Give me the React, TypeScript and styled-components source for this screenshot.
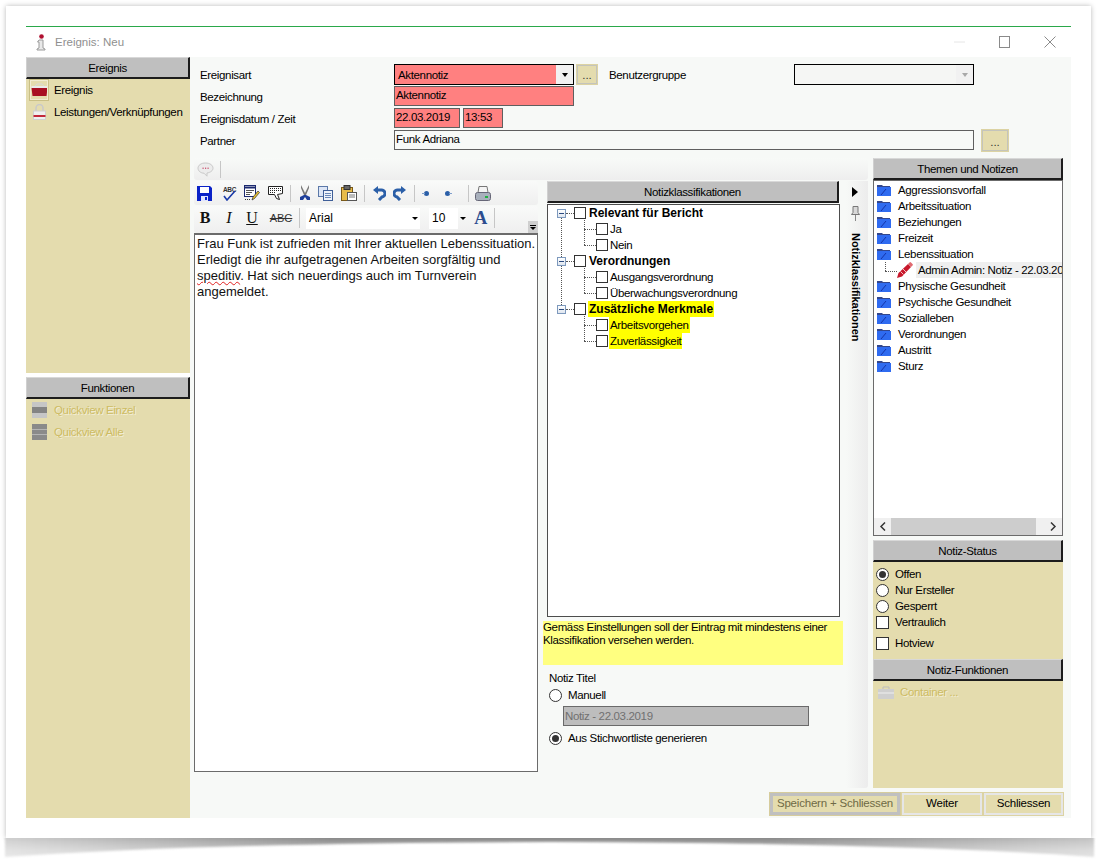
import React from "react";
import styled, { createGlobalStyle } from "styled-components";

const GlobalStyle = createGlobalStyle`
  html, body {
    margin: 0;
    padding: 0;
    background: #fff;
  }
  body {
    font-family: "Liberation Sans", Arial, sans-serif;
    font-size: 11.5px;
    letter-spacing: -0.35px;
    color: #000;
  }
  svg {
    flex: none;
  }
`;

const TAN = "#e4dcae";

const Page = styled.div`
  width: 1105px;
  height: 867px;
  padding: 6px 0 0 6px;
  box-sizing: border-box;
  overflow: hidden;
`;

const Sheet = styled.div`
  position: relative;
  width: 1085px;
  height: 832px;
  box-sizing: border-box;
  padding: 20px;
  background: #fff;
  box-shadow: 0 0 5px rgba(0, 0, 0, 0.28);
`;

const SheetShadow = styled.svg`
  position: absolute;
  left: -4px;
  top: 100%;
`;

const Dialog = styled.div`
  display: flex;
  flex-direction: column;
  height: 792px;
  border-top: 1px solid #2aa84a;
  box-sizing: border-box;
`;

const TitleBar = styled.div`
  flex: 0 0 30px;
  display: flex;
  align-items: center;
  padding-left: 10px;
  color: #8f8f8f;
`;

const TitleText = styled.span`
  margin-left: 9px;
  letter-spacing: 0;
`;

const WindowButtons = styled.div`
  margin-left: auto;
  display: flex;
  align-items: center;
  padding-right: 15px;
  gap: 34px;
`;

const Body = styled.div`
  flex: 1;
  display: flex;
  background: #f7f9f7;
  min-height: 0;
`;

const LeftColumn = styled.div`
  flex: 0 0 164px;
  min-width: 0;
  display: flex;
  flex-direction: column;
  background: #fff;
`;

const LeftPanel = styled.div<{ $height?: number }>`
  background: ${TAN};
  ${(p) => (p.$height ? `flex: 0 0 ${p.$height}px;` : "flex: 1;")}
  ${(p) => (p.$height ? "margin-bottom: 4px;" : "")}
`;

const Header = styled.div`
  height: 22px;
  box-sizing: border-box;
  display: flex;
  align-items: center;
  justify-content: center;
  background: #bfbfbf;
  border-top: 1px solid #d8d8d8;
  border-left: 1px solid #d0d0d0;
  border-right: 2px solid #1c1c1c;
  border-bottom: 2px solid #1c1c1c;
  flex: none;
`;

const NavItem = styled.div<{ $disabled?: boolean }>`
  height: 22px;
  display: flex;
  align-items: center;
  padding-left: 3px;
  gap: 5px;
  white-space: nowrap;
  color: ${(p) => (p.$disabled ? "#cdbb62" : "#000")};
  text-shadow: ${(p) => (p.$disabled ? "1px 1px 0 #f3eed6" : "none")};
`;

const NavIcon = styled.span<{ $selected?: boolean }>`
  width: 20px;
  height: 22px;
  box-sizing: border-box;
  display: flex;
  align-items: center;
  justify-content: center;
  border: 1px solid ${(p) => (p.$selected ? "#c9bf85" : "transparent")};
  outline: ${(p) => (p.$selected ? "1px solid #f1ecd2" : "none")};
  outline-offset: -2px;
`;

const Main = styled.div`
  flex: 1;
  min-width: 0;
  display: flex;
  flex-direction: column;
`;

const Form = styled.div`
  height: 94px;
  padding: 7px 0 0 10px;
  box-sizing: border-box;
  display: flex;
  flex-direction: column;
`;

const FormRow = styled.div<{ $height: number; $gap?: number }>`
  height: ${(p) => p.$height}px;
  margin-bottom: ${(p) => p.$gap ?? 1}px;
  display: flex;
  align-items: center;
`;

const FormLabel = styled.label<{ $flush?: boolean }>`
  flex: 0 0 194px;
  margin-top: ${(p) => (p.$flush ? 0 : 2)}px;
`;

const GroupLabelInline = styled.span`
  flex: 0 0 185px;
  margin-left: 11px;
`;

const Combo = styled.div<{ $tone: "required" | "disabled"; $width: number }>`
  width: ${(p) => p.$width}px;
  height: 21px;
  box-sizing: border-box;
  border: 1px solid #000;
  background: ${(p) => (p.$tone === "required" ? "#ff8080" : "#f5f6f4")};
  display: flex;
  align-items: center;
  padding-left: 3px;
`;

const ComboArrow = styled.span<{ $disabled?: boolean }>`
  margin-left: auto;
  width: 17px;
  height: 19px;
  background: #f1f1f1;
  display: flex;
  align-items: center;
  justify-content: center;
  &::after {
    content: "";
    border-left: 3px solid transparent;
    border-right: 3px solid transparent;
    border-top: 4px solid ${(p) => (p.$disabled ? "#a8a8a8" : "#000")};
  }
`;

const Field = styled.div<{ $width: number; $required?: boolean; $offset?: number }>`
  width: ${(p) => p.$width}px;
  height: 20px;
  margin-left: ${(p) => p.$offset ?? 0}px;
  box-sizing: border-box;
  border: 1px solid #5f5f5f;
  background: ${(p) => (p.$required ? "#ff8080" : "#f7f9f7")};
  padding: 0 0 2px 1px;
  display: flex;
  align-items: center;
  white-space: nowrap;
  overflow: hidden;
`;

const EllipsisButton = styled.button<{ $width: number; $height: number; $offset: number }>`
  width: ${(p) => p.$width}px;
  height: ${(p) => p.$height}px;
  margin: 0 0 0 ${(p) => p.$offset}px;
  box-sizing: border-box;
  padding: 0 0 2px;
  background: ${TAN};
  border: 2px solid #c4c4bc;
  outline: 1px solid #dcd3a3;
  outline-offset: -1px;
  font: 11.5px "Liberation Sans", Arial, sans-serif;
  color: #333;
  display: flex;
  align-items: flex-end;
  justify-content: center;
`;

const WorkArea = styled.div`
  padding: 0 8px 0 4px;
  height: 630px;
  margin-top: 7px;
  display: flex;
  gap: 5px;
`;

const Center = styled.div`
  width: 674px;
  display: flex;
  flex-direction: column;
`;

const MessageStrip = styled.div`
  height: 22px;
  flex: none;
  display: flex;
  align-items: center;
  padding-left: 3px;
  gap: 6px;
  background: linear-gradient(#f8faf8, #eeeeee);
  border-radius: 3px;
`;

const ToolSep = styled.span<{ $tall?: boolean }>`
  width: 1px;
  height: ${(p) => (p.$tall ? 20 : 17)}px;
  background: #c6c6c6;
  flex: none;
`;

const CenterRow = styled.div`
  flex: 1;
  margin-top: 1px;
  display: flex;
  min-height: 0;
`;

const EditorColumn = styled.div`
  flex: 0 0 344px;
  display: flex;
  flex-direction: column;
  height: 591px;
`;

const ToolRow = styled.div<{ $height: number; $offset?: number; $lift?: number }>`
  height: ${(p) => p.$height}px;
  margin-top: ${(p) => p.$offset ?? 0}px;
  padding-bottom: ${(p) => p.$lift ?? 0}px;
  box-sizing: border-box;
  flex: none;
  position: relative;
  display: flex;
  align-items: center;
  background: linear-gradient(#f9faf9, #efefef);
  border-radius: 3px;
`;

const ToolGroup = styled.div<{ $gap: number }>`
  display: flex;
  align-items: center;
  gap: ${(p) => p.$gap}px;
  padding-left: 3px;
`;

const ToolSpacer = styled.span`
  width: 1px;
  flex: none;
`;

const FormatBtn = styled.span<{ $w: number; $kind: "b" | "i" | "u" | "s"; $offset?: number }>`
  width: ${(p) => p.$w}px;
  margin-left: ${(p) => p.$offset ?? 0}px;
  text-align: center;
  flex: none;
  letter-spacing: 0;
  font-family: ${(p) =>
    p.$kind === "s" ? '"Liberation Sans", sans-serif' : '"Liberation Serif", serif'};
  font-size: ${(p) => (p.$kind === "s" ? 11 : 16)}px;
  font-weight: ${(p) => (p.$kind === "b" ? 700 : 400)};
  font-style: ${(p) => (p.$kind === "i" ? "italic" : "normal")};
  text-decoration: ${(p) =>
    p.$kind === "u" ? "underline" : p.$kind === "s" ? "line-through" : "none"};
  color: ${(p) => (p.$kind === "s" ? "#333" : "#111")};
`;

const FontBox = styled.div<{ $width: number; $offset?: number }>`
  width: ${(p) => p.$width}px;
  height: 21px;
  margin-left: ${(p) => p.$offset ?? 0}px;
  flex: none;
  background: #fff;
  display: flex;
  align-items: center;
  padding-left: 3px;
  box-sizing: border-box;
  font-size: 12px;
  letter-spacing: 0;
`;

const MiniArrow = styled.span<{ $push?: boolean; $offset?: number }>`
  width: 10px;
  flex: none;
  margin-left: ${(p) => (p.$push ? "auto" : `${p.$offset ?? 0}px`)};
  display: flex;
  justify-content: center;
  &::after {
    content: "";
    border-left: 3px solid transparent;
    border-right: 3px solid transparent;
    border-top: 3px solid #000;
  }
`;

const BigA = styled.span`
  font: 700 18px "Liberation Serif", serif;
  color: #2c4d8f;
  width: 15px;
  margin-left: -1px;
  text-align: center;
  flex: none;
`;

const Overflow = styled.span`
  position: absolute;
  right: 0;
  bottom: 0;
  width: 10px;
  height: 12px;
  background: #cfcfcf;
  display: flex;
  flex-direction: column;
  align-items: center;
  justify-content: center;
  gap: 1px;
  &::before {
    content: "";
    width: 6px;
    height: 1px;
    background: #000;
  }
  &::after {
    content: "";
    border-left: 3px solid transparent;
    border-right: 3px solid transparent;
    border-top: 3px solid #000;
  }
`;

const Editor = styled.div`
  flex: 1;
  background: #fff;
  border: 1px solid #6b6b6b;
  border-top-width: 2px;
  padding: 1px 0 0 2px;
  font: 13px/16px "Liberation Sans", Arial, sans-serif;
  letter-spacing: 0;
  color: #111;
`;

const Misspelled = styled.span`
  text-decoration: underline wavy #e02020 1px;
  text-underline-offset: 1px;
`;

const ClassColumn = styled.div`
  flex: 0 0 300px;
  margin-left: 5px;
  display: flex;
  flex-direction: column;
`;

const ClassHeader = styled(Header)`
  margin: 0 4px;
`;

const ClassTree = styled.div`
  height: 413px;
  box-sizing: border-box;
  margin: 1px 3px 0 4px;
  background: #fff;
  border: 1px solid #4d4d4d;
`;

const TreeGroup = styled.div<{ $spine?: boolean }>`
  position: relative;
  &::before {
    content: "";
    display: ${(p) => (p.$spine ? "block" : "none")};
    position: absolute;
    left: 13px;
    top: 13px;
    bottom: -4px;
    border-left: 1px dotted #555;
  }
`;

const TreeRow = styled.div<{ $child?: boolean }>`
  height: 16px;
  display: flex;
  align-items: center;
  margin-left: ${(p) => (p.$child ? 36 : 9)}px;
`;

const Expander = styled.span`
  width: 9px;
  height: 9px;
  box-sizing: border-box;
  border: 1px solid #7d99bd;
  background: linear-gradient(#fff, #dfe6ef);
  display: flex;
  align-items: center;
  justify-content: center;
  flex: none;
  &::after {
    content: "";
    width: 5px;
    height: 1px;
    background: #2a4a80;
  }
`;

const Dots = styled.span<{ $w: number }>`
  width: ${(p) => p.$w}px;
  border-top: 1px dotted #555;
  flex: none;
`;

const Elbow = styled.span<{ $last?: boolean }>`
  position: relative;
  width: 12px;
  height: 16px;
  flex: none;
  &::before {
    content: "";
    position: absolute;
    left: 0;
    top: -1px;
    height: ${(p) => (p.$last ? 9 : 17)}px;
    border-left: 1px dotted #555;
  }
  &::after {
    content: "";
    position: absolute;
    left: 0;
    right: 0;
    top: 8px;
    border-top: 1px dotted #555;
  }
`;

const Check = styled.span<{ $size?: number }>`
  width: ${(p) => p.$size ?? 12}px;
  height: ${(p) => p.$size ?? 12}px;
  box-sizing: border-box;
  border: 1px solid #333;
  background: #fff;
  flex: none;
`;

const TreeLabel = styled.span<{ $bold?: boolean; $mark?: boolean }>`
  margin-left: ${(p) => (p.$bold ? 2 : 1)}px;
  padding: 0 1px;
  line-height: 16px;
  font-size: ${(p) => (p.$bold ? 12 : 11.5)}px;
  letter-spacing: ${(p) => (p.$bold ? 0 : -0.35)}px;
  font-weight: ${(p) => (p.$bold ? 700 : 400)};
  background: ${(p) => (p.$mark ? "#ffff00" : "transparent")};
  white-space: nowrap;
`;

const Notice = styled.div`
  margin-top: 4px;
  height: 44px;
  box-sizing: border-box;
  background: #ffff80;
  line-height: 13px;
`;

const TitleGroup = styled.div`
  padding: 5px 0 0 6px;
  display: flex;
  flex-direction: column;
`;

const GroupLabel = styled.div`
  height: 16px;
  display: flex;
  align-items: center;
`;

const RadioRow = styled.div<{ $height?: number }>`
  height: ${(p) => p.$height ?? 16}px;
  display: flex;
  align-items: center;
  gap: 6px;
  white-space: nowrap;
`;

const Radio = styled.span<{ $checked?: boolean }>`
  width: 13px;
  height: 13px;
  box-sizing: border-box;
  border-radius: 50%;
  border: 1px solid #333;
  background: #fff;
  flex: none;
  display: flex;
  align-items: center;
  justify-content: center;
  &::after {
    content: "";
    display: ${(p) => (p.$checked ? "block" : "none")};
    width: 7px;
    height: 7px;
    border-radius: 50%;
    background: #333;
  }
`;

const TitleInput = styled.div`
  margin: 2px 0 2px 14px;
  width: 246px;
  height: 20px;
  box-sizing: border-box;
  background: #bdbdbd;
  border: 1px solid #6a6a6a;
  color: #707070;
  padding-left: 1px;
  display: flex;
  align-items: center;
`;

const SideTab = styled.div`
  margin-left: 3px;
  width: 22px;
  box-sizing: border-box;
  padding: 6px 4px 0 0;
  display: flex;
  flex-direction: column;
  align-items: center;
  background: linear-gradient(90deg, #f7f9f7, #ececec);
  border-radius: 0 0 3px 3px;
`;

const TabArrow = styled.span`
  border-left: 6px solid #000;
  border-top: 5px solid transparent;
  border-bottom: 5px solid transparent;
`;

const TabPin = styled.svg`
  margin-top: 9px;
`;

const TabText = styled.span`
  writing-mode: vertical-rl;
  margin-top: 12px;
  font-weight: 700;
  font-size: 11px;
  letter-spacing: -0.05px;
  line-height: 11px;
`;

const RightColumn = styled.div`
  width: 190px;
  display: flex;
  flex-direction: column;
`;

const TopicBox = styled.div`
  height: 356px;
  box-sizing: border-box;
  border: 1px solid #6b6b6b;
  background: #fff;
  display: flex;
  flex-direction: column;
  overflow: hidden;
`;

const TopicList = styled.div`
  flex: 1;
  padding-top: 1px;
`;

const TopicRow = styled.div`
  height: 16px;
  display: flex;
  align-items: center;
  padding-left: 3px;
  gap: 7px;
  white-space: nowrap;
`;

const NoteRow = styled.div`
  height: 16px;
  display: flex;
  align-items: center;
  padding-left: 11px;
  white-space: nowrap;
  overflow: hidden;
`;

const NoteLine = styled.span`
  position: relative;
  width: 12px;
  height: 16px;
  flex: none;
  &::before {
    content: "";
    position: absolute;
    left: 0;
    top: 0;
    height: 9px;
    border-left: 1px dotted #555;
  }
  &::after {
    content: "";
    position: absolute;
    left: 0;
    right: 0;
    top: 9px;
    border-top: 1px dotted #555;
  }
`;

const NoteLabel = styled.span`
  margin-left: 3px;
  padding-left: 2px;
  flex: 1;
  min-width: 0;
  line-height: 16px;
  background: #efefef;
`;

const HScroll = styled.div`
  height: 17px;
  flex: none;
  display: flex;
  align-items: center;
  background: #f0f0f0;
`;

const HScrollButton = styled.span<{ $offset?: number }>`
  width: 17px;
  margin-left: ${(p) => p.$offset ?? 0}px;
  display: flex;
  justify-content: center;
  flex: none;
`;

const HScrollThumb = styled.span`
  flex: 1;
  height: 100%;
  background: #cdcdcd;
`;

const StatusHeader = styled(Header)`
  margin-top: 4px;
`;

const TanPanel = styled.div<{ $height: number }>`
  height: ${(p) => p.$height}px;
  background: ${TAN};
  box-sizing: border-box;
`;

const StatusList = styled.div`
  padding: 4px 0 0 3px;
`;

const DisabledRow = styled.div`
  height: 22px;
  display: flex;
  align-items: center;
  gap: 6px;
  padding-left: 5px;
  color: #cdbb62;
  text-shadow: 1px 1px 0 #f3eed6;
`;

const Footer = styled.div`
  margin-top: 5px;
  padding-right: 8px;
  display: flex;
  justify-content: flex-end;
  gap: 2px;
`;

const ActionButton = styled.button<{ $width: number; $primary?: boolean }>`
  width: ${(p) => p.$width}px;
  height: 22px;
  box-sizing: border-box;
  margin: 0;
  padding: 0 0 2px;
  white-space: nowrap;
  background: ${TAN};
  border: ${(p) => (p.$primary ? "3px solid #c0c0c0" : "2px solid #e6e6e6")};
  outline: 1px solid ${(p) => (p.$primary ? "#d6cc9c" : "#dcd3a3")};
  box-shadow: ${(p) => (p.$primary ? "none" : "0 0 0 1px #aaa")};
  font: 11.5px "Liberation Sans", Arial, sans-serif;
  letter-spacing: -0.2px;
  color: ${(p) => (p.$primary ? "#6f6a45" : "#000")};
`;

const TitleIcon = () => (
  <svg width="10" height="17" viewBox="0 0 10 17">
    <path d="M3 6h4v8l2 1v1H1v-1l2-1V8H1.500z" fill="#e9e9e9" stroke="#9b9b9b" />
    <circle cx="5.500" cy="2.500" r="2.300" fill="#b01030" />
  </svg>
);

const BagIcon = () => (
  <svg width="17" height="14" viewBox="0 0 17 14">
    <path d="M4 3l2-2h5l2 2" fill="none" stroke="#d8d8d8" />
    <rect x="0.500" y="3" width="16" height="3" fill="#eaeaea" />
    <path d="M0.500 5h16l-1 8h-14z" fill="#a80f22" />
  </svg>
);

const LockIcon = () => (
  <svg width="13" height="16" viewBox="0 0 13 16">
    <path d="M3 7V4a3.500 3.500 0 0 1 7 0v3" fill="none" stroke="#c9c9c9" strokeWidth="1.500" />
    <rect x="0.500" y="7" width="12" height="8.500" fill="#efefef" stroke="#d0d0d0" />
    <rect x="0.500" y="11" width="12" height="2" fill="#c2283a" />
  </svg>
);

const QuickOneIcon = () => (
  <svg width="15" height="16" viewBox="0 0 15 16">
    <rect width="15" height="16" fill="#c6c6c6" />
    <rect y="5" width="15" height="6" fill="#848484" />
  </svg>
);

const QuickAllIcon = () => (
  <svg width="15" height="16" viewBox="0 0 15 16">
    <rect width="15" height="16" fill="#8a8a8a" />
    <path d="M0 5.500h15M0 10.500h15" stroke="#b4b4b4" />
  </svg>
);

const BubbleIcon = () => (
  <svg width="17" height="15" viewBox="0 0 17 15">
    <path d="M8.500 1C4 1 1 3.300 1 6.200s3 5 6 5l3 3v-3.200c3.500-.5 6-2.400 6-4.800C16 3.300 13 1 8.500 1z" fill="#ececec" stroke="#c9c9c9" />
    <path d="M5.500 6.200h1.200M8 6.200h1.200M10.500 6.200h1.200" stroke="#c02048" />
  </svg>
);

const SaveIcon = () => (
  <svg width="15" height="15" viewBox="0 0 15 15">
    <path d="M0 0h13l2 2v13H0z" fill="#0a22c8" />
    <rect x="3" y="1" width="9" height="6" fill="#fff" />
    <rect x="4" y="10" width="7" height="5" fill="#dfe4ff" />
    <rect x="8" y="11" width="2" height="3" fill="#0a22c8" />
  </svg>
);

const SpellIcon = () => (
  <svg width="15" height="15" viewBox="0 0 15 15" style={{ marginLeft: 2 }}>
    <text x="1" y="6" fontSize="6.500" fontFamily="Liberation Sans" fontWeight="700" fill="#333">ABC</text>
    <path d="M2 10l3 4 8-9" fill="none" stroke="#1a3aa8" strokeWidth="1.600" />
  </svg>
);

const EditDocIcon = () => (
  <svg width="16" height="16" viewBox="0 0 16 16">
    <rect x="0.500" y="0.500" width="11" height="11" fill="#fff" stroke="#1c2a70" />
    <path d="M0.500 2.500h11" stroke="#1c2a70" strokeWidth="2" />
    <path d="M2 5.500h8M2 7.500h6M2 9.500h4" stroke="#555" />
    <path d="M8 15l1-3 5-6 1.500 1.500-5 6z" fill="#e8c030" stroke="#333" strokeWidth=".7" />
    <path d="M1 14.500h6" stroke="#333" strokeDasharray="1 1" />
  </svg>
);

const KeysIcon = () => (
  <svg width="15" height="15" viewBox="0 0 15 15">
    <path d="M0.500 0.500h14v7l-5 1 2 5-3-1-2-4h-6z" fill="#fff" stroke="#222" />
    <path d="M2 2.500h11M2 4.500h11M2 6.500h6" stroke="#222" strokeDasharray="1 1" />
  </svg>
);

const CutIcon = () => (
  <svg width="12" height="16" viewBox="0 0 12 16">
    <path d="M2 0l4 8 4-8v3L7 10H5L2 3z" fill="#777" />
    <path d="M5 10L1 12v3h3l2-3 2 3h3v-3l-4-2z" fill="#1f3f9a" />
  </svg>
);

const CopyIcon = () => (
  <svg width="15" height="15" viewBox="0 0 15 15">
    <rect x="0.500" y="0.500" width="9" height="10" fill="#dde6f6" stroke="#5b78a8" />
    <rect x="5.500" y="4.500" width="9" height="10" fill="#eef3fb" stroke="#3f5f98" />
    <path d="M7 7.500h6M7 9.500h6M7 11.500h6" stroke="#6a88b8" />
  </svg>
);

const PasteIcon = () => (
  <svg width="16" height="16" viewBox="0 0 16 16">
    <rect x="0.500" y="2.500" width="11" height="13" fill="#e7bb4a" stroke="#7a5a1a" />
    <rect x="3" y="0.500" width="6" height="4" fill="#666" stroke="#333" />
    <rect x="6.500" y="7.500" width="9" height="8" fill="#fff" stroke="#555" />
    <path d="M8 10h6M8 12h6" stroke="#777" />
  </svg>
);

const UndoIcon = ({ flip }: { flip?: boolean }) => (
  <svg width="13" height="15" viewBox="0 0 13 15" transform={flip ? "scale(-1 1)" : undefined}>
    <path d="M4 4h4a3.500 3.500 0 0 1 1 7l-3 3" fill="none" stroke="#2b5fa8" strokeWidth="3" />
    <path d="M5 0v8L0 4z" fill="#2b5fa8" />
  </svg>
);

const IndentIcon = ({ flip }: { flip?: boolean }) => (
  <svg width="7" height="7" viewBox="0 0 7 7" transform={flip ? "scale(-1 1)" : undefined}>
    <circle cx="2.500" cy="3.500" r="2.500" fill="#2b5fa8" />
    <path d="M4 3h3v1H4z" fill="#7f9fcc" />
  </svg>
);

const PrintIcon = () => (
  <svg width="16" height="15" viewBox="0 0 16 15" style={{ marginLeft: -2 }}>
    <path d="M4 0.500h8l1 6H3z" fill="#f4f4f4" stroke="#777" />
    <rect x="0.500" y="6.500" width="15" height="8" rx="2" fill="#a8b0bc" stroke="#667" />
    <rect x="10" y="10" width="3" height="2" fill="#20b040" />
  </svg>
);

const FolderIcon = () => (
  <svg width="14" height="12" viewBox="0 0 14 12">
    <path d="M0 1h5l1 1h7v2H0z" fill="#33478c" />
    <rect y="3" width="14" height="9" fill="#2f6bf0" />
    <path d="M4 11l5-6" stroke="#1434a8" />
  </svg>
);

const PenIcon = () => (
  <svg width="16" height="16" viewBox="0 0 16 16">
    <path d="M0 16l1.500-5L11 2l3 3-9 9.500z" fill="#c8182c" />
    <path d="M11 2l1.500-1.500a1 1 0 0 1 1.500 0l1.500 1.500a1 1 0 0 1 0 1.500L14 5z" fill="#e06a70" />
    <path d="M3.500 9.500l3 3M6 7l3 3" stroke="#f4c4c4" />
  </svg>
);

const CaseIcon = () => (
  <svg width="16" height="13" viewBox="0 0 16 13">
    <path d="M5 3V1h6v2" fill="none" stroke="#bdbdbd" />
    <rect y="3" width="16" height="10" fill="#cfcfcf" />
    <path d="M0 7h16" stroke="#efefef" />
  </svg>
);

const MaxIcon = () => (
  <svg width="11" height="12" viewBox="0 0 11 12">
    <rect x="0.500" y="0.500" width="10" height="11" fill="none" stroke="#8a8a8a" />
  </svg>
);

const CloseIcon = () => (
  <svg width="12" height="12" viewBox="0 0 12 12">
    <path d="M0.500 0.500l11 11M11.500 0.500l-11 11" stroke="#8a8a8a" />
  </svg>
);

const MinIcon = () => (
  <svg width="11" height="2" viewBox="0 0 11 2">
    <path d="M0 1h11" stroke="#e6e6e6" />
  </svg>
);

const PinIcon = () => (
  <TabPin width="9" height="15" viewBox="0 0 9 15">
    <path d="M2 0.500h5v6l1.500 2h-8L2 6.500z" fill="#d8d8d8" stroke="#777" />
    <path d="M4.500 9v6" stroke="#888" />
  </TabPin>
);

const Chevron = ({ right }: { right?: boolean }) => (
  <svg width="7" height="9" viewBox="0 0 7 9">
    <path d={right ? "M1 0.500l4 4-4 4" : "M6 0.500l-4 4 4 4"} fill="none" stroke="#333" strokeWidth="1.500" />
  </svg>
);

const classGroups = [
  { title: "Relevant für Bericht", items: ["Ja", "Nein"] },
  { title: "Verordnungen", items: ["Ausgangsverordnung", "Überwachungsverordnung"] },
  { title: "Zusätzliche Merkmale", items: ["Arbeitsvorgehen", "Zuverlässigkeit"], mark: true },
];

const topicsBefore = ["Aggressionsvorfall", "Arbeitssituation", "Beziehungen", "Freizeit", "Lebenssituation"];
const topicsAfter = ["Physische Gesundheit", "Psychische Gesundheit", "Sozialleben", "Verordnungen", "Austritt", "Sturz"];

const App = () => {
  return (
    <Page>
      <GlobalStyle />
      <Sheet>
        <SheetShadow width="1095" height="24" viewBox="0 0 1095 24">
          <defs>
            <linearGradient id="sheetFade" x1="0" x2="1" y1="0" y2="0">
              <stop offset="0" stopColor="#cfcfcf" />
              <stop offset="0.3" stopColor="#8a8a8a" />
              <stop offset="0.7" stopColor="#8a8a8a" />
              <stop offset="1" stopColor="#c4c4c4" />
            </linearGradient>
            <linearGradient id="sheetDrop" x1="0" x2="0" y1="0" y2="1">
              <stop offset="0" stopColor="#fff" />
              <stop offset="0.5" stopColor="#999" />
              <stop offset="1" stopColor="#666" />
            </linearGradient>
            <mask id="sheetMask">
              <rect width="1095" height="24" fill="url(#sheetDrop)" />
            </mask>
            <filter id="sheetBlur">
              <feGaussianBlur stdDeviation="1" />
            </filter>
          </defs>
          <g mask="url(#sheetMask)">
            <path d="M3 -3H1092V19Q900 5 548 4Q200 5 3 19Z" fill="url(#sheetFade)" filter="url(#sheetBlur)" />
          </g>
        </SheetShadow>
        <Dialog>
          <TitleBar>
            <TitleIcon />
            <TitleText>Ereignis: Neu</TitleText>
            <WindowButtons>
              <MinIcon />
              <MaxIcon />
              <CloseIcon />
            </WindowButtons>
          </TitleBar>
          <Body>
            <LeftColumn>
              <Header>Ereignis</Header>
              <LeftPanel $height={294}>
                <NavItem>
                  <NavIcon $selected>
                    <BagIcon />
                  </NavIcon>
                  Ereignis
                </NavItem>
                <NavItem>
                  <NavIcon>
                    <LockIcon />
                  </NavIcon>
                  Leistungen/Verknüpfungen
                </NavItem>
              </LeftPanel>
              <Header>Funktionen</Header>
              <LeftPanel>
                <NavItem $disabled>
                  <NavIcon>
                    <QuickOneIcon />
                  </NavIcon>
                  Quickview Einzel
                </NavItem>
                <NavItem $disabled>
                  <NavIcon>
                    <QuickAllIcon />
                  </NavIcon>
                  Quickview Alle
                </NavItem>
              </LeftPanel>
            </LeftColumn>
            <Main>
              <Form>
                <FormRow $height={21}>
                  <FormLabel $flush>Ereignisart</FormLabel>
                  <Combo $tone="required" $width={180}>
                    Aktennotiz
                    <ComboArrow />
                  </Combo>
                  <EllipsisButton $width={22} $height={21} $offset={2}>
                    ...
                  </EllipsisButton>
                  <GroupLabelInline>Benutzergruppe</GroupLabelInline>
                  <Combo $tone="disabled" $width={180}>
                    <ComboArrow $disabled />
                  </Combo>
                </FormRow>
                <FormRow $height={20} $gap={2}>
                  <FormLabel>Bezeichnung</FormLabel>
                  <Field $width={180} $required>
                    Aktennotiz
                  </Field>
                </FormRow>
                <FormRow $height={20} $gap={2}>
                  <FormLabel>Ereignisdatum / Zeit</FormLabel>
                  <Field $width={66} $required>
                    22.03.2019
                  </Field>
                  <Field $width={40} $required $offset={3}>
                    13:53
                  </Field>
                </FormRow>
                <FormRow $height={20}>
                  <FormLabel>Partner</FormLabel>
                  <Field $width={580}>Funk Adriana</Field>
                  <EllipsisButton $width={28} $height={23} $offset={7}>
                    ...
                  </EllipsisButton>
                </FormRow>
              </Form>
              <WorkArea>
                <Center>
                  <MessageStrip>
                    <BubbleIcon />
                    <ToolSep />
                  </MessageStrip>
                  <CenterRow>
                    <EditorColumn>
                      <ToolRow $height={24}>
                        <ToolGroup $gap={7.5}>
                          <SaveIcon />
                          <SpellIcon />
                          <EditDocIcon />
                          <KeysIcon />
                          <ToolSep />
                          <CutIcon />
                          <CopyIcon />
                          <PasteIcon />
                          <ToolSep />
                          <UndoIcon />
                          <UndoIcon flip />
                          <ToolSep />
                          <IndentIcon flip />
                          <ToolSpacer />
                          <IndentIcon />
                          <ToolSpacer />
                          <ToolSep />
                          <PrintIcon />
                        </ToolGroup>
                      </ToolRow>
                      <ToolRow $height={27} $offset={1} $lift={3}>
                        <ToolGroup $gap={6}>
                          <FormatBtn $w={16} $kind="b">B</FormatBtn>
                          <FormatBtn $w={12} $kind="i" $offset={4}>I</FormatBtn>
                          <FormatBtn $w={14} $kind="u" $offset={4}>U</FormatBtn>
                          <FormatBtn $w={24} $kind="s" $offset={4}>ABC</FormatBtn>
                          <ToolSep $tall />
                          <FontBox $width={114}>
                            Arial
                            <MiniArrow $push />
                          </FontBox>
                          <FontBox $width={29} $offset={3}>
                            10
                          </FontBox>
                          <MiniArrow $offset={-6} />
                          <BigA>A</BigA>
                          <ToolSep $tall />
                        </ToolGroup>
                        <Overflow />
                      </ToolRow>
                      <Editor>
                        Frau Funk ist zufrieden mit Ihrer aktuellen Lebenssituation. Erledigt die ihr aufgetragenen
                        Arbeiten sorgfältig und <Misspelled>speditiv</Misspelled>. Hat sich neuerdings auch im
                        Turnverein angemeldet.
                      </Editor>
                    </EditorColumn>
                    <ClassColumn>
                      <ClassHeader>Notizklassifikationen</ClassHeader>
                      <ClassTree>
                        {classGroups.map((group, i) => (
                          <TreeGroup key={group.title} $spine={i < classGroups.length - 1}>
                            <TreeRow>
                              <Expander />
                              <Dots $w={8} />
                              <Check />
                              <TreeLabel $bold $mark={group.mark}>
                                {group.title}
                              </TreeLabel>
                            </TreeRow>
                            {group.items.map((item, j) => (
                              <TreeRow $child key={item}>
                                <Elbow $last={j === group.items.length - 1} />
                                <Check />
                                <TreeLabel $mark={group.mark}>{item}</TreeLabel>
                              </TreeRow>
                            ))}
                          </TreeGroup>
                        ))}
                      </ClassTree>
                      <Notice>
                        Gemäss Einstellungen soll der Eintrag mit mindestens einer
                        <br />
                        Klassifikation versehen werden.
                      </Notice>
                      <TitleGroup>
                        <GroupLabel>Notiz Titel</GroupLabel>
                        <RadioRow $height={18}>
                          <Radio />
                          Manuell
                        </RadioRow>
                        <TitleInput>Notiz - 22.03.2019</TitleInput>
                        <RadioRow $height={20}>
                          <Radio $checked />
                          Aus Stichwortliste generieren
                        </RadioRow>
                      </TitleGroup>
                    </ClassColumn>
                    <SideTab>
                      <TabArrow />
                      <PinIcon />
                      <TabText>Notizklassifikationen</TabText>
                    </SideTab>
                  </CenterRow>
                </Center>
                <RightColumn>
                  <Header>Themen und Notizen</Header>
                  <TopicBox>
                    <TopicList>
                      {topicsBefore.map((t) => (
                        <TopicRow key={t}>
                          <FolderIcon />
                          {t}
                        </TopicRow>
                      ))}
                      <NoteRow>
                        <NoteLine />
                        <PenIcon />
                        <NoteLabel>Admin Admin: Notiz - 22.03.2019</NoteLabel>
                      </NoteRow>
                      {topicsAfter.map((t) => (
                        <TopicRow key={t}>
                          <FolderIcon />
                          {t}
                        </TopicRow>
                      ))}
                    </TopicList>
                    <HScroll>
                      <HScrollButton>
                        <Chevron />
                      </HScrollButton>
                      <HScrollThumb />
                      <HScrollButton $offset={9}>
                        <Chevron right />
                      </HScrollButton>
                    </HScroll>
                  </TopicBox>
                  <StatusHeader>Notiz-Status</StatusHeader>
                  <TanPanel $height={97}>
                    <StatusList>
                      <RadioRow>
                        <Radio $checked />
                        Offen
                      </RadioRow>
                      <RadioRow>
                        <Radio />
                        Nur Ersteller
                      </RadioRow>
                      <RadioRow>
                        <Radio />
                        Gesperrt
                      </RadioRow>
                      <RadioRow>
                        <Check $size={13} />
                        Vertraulich
                      </RadioRow>
                      <RadioRow $height={26}>
                        <Check $size={13} />
                        Hotview
                      </RadioRow>
                    </StatusList>
                  </TanPanel>
                  <Header>Notiz-Funktionen</Header>
                  <TanPanel $height={107}>
                    <DisabledRow>
                      <CaseIcon />
                      Container ...
                    </DisabledRow>
                  </TanPanel>
                </RightColumn>
              </WorkArea>
              <Footer>
                <ActionButton $width={130} $primary>
                  Speichern + Schliessen
                </ActionButton>
                <ActionButton $width={80}>Weiter</ActionButton>
                <ActionButton $width={79}>Schliessen</ActionButton>
              </Footer>
            </Main>
          </Body>
        </Dialog>
      </Sheet>
    </Page>
  );
};

export default App;
